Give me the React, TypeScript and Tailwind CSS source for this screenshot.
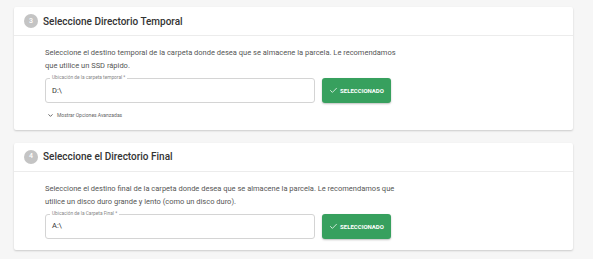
import { ChevronDown, Check } from "lucide-react";

type StepProps = {
  num: number;
  title: string;
  desc: string;
  label: string;
  value: string;
  advanced?: boolean;
};

function Step({ num, title, desc, label, value, advanced }: StepProps) {
  return (
    <div className="w-[559px] bg-white shadow-[0_1px_2px_rgba(0,0,0,0.18)] rounded-[2px]">
      <div className="h-[29px] flex items-center pl-[10px] border-b border-[#ececec]">
        <div className="w-[14px] h-[14px] rounded-full bg-[#c4c4c4] text-white text-[7px] font-medium flex items-center justify-center">
          {num}
        </div>
        <span className="ml-[5px] text-[10px] font-medium text-[#333]">{title}</span>
      </div>
      <div className={`pl-[31px] pt-[10px] ${advanced ? "pb-[10px]" : "pb-[11px]"}`}>
        <div className="w-[353px]">
          <p className="text-[7.5px] leading-[13px] text-[#555]">{desc}</p>
          <div className="flex items-center gap-[7px] mt-[6px] w-[347px]">
            <div className="relative w-[270px] h-[25px] border border-[#d4d4d4] rounded-[3px] flex items-center pl-[6px]">
              <span className="absolute -top-[4px] left-[4px] bg-white px-[2px] text-[4.8px] leading-[6px] text-[#888]">
                {label}
              </span>
              <span className="text-[7.5px] text-[#333]">{value}</span>
            </div>
            <button className="w-[69px] h-[25px] bg-[#37a05e] rounded-[3px] shadow-[0_1px_2px_rgba(0,0,0,0.25)] flex items-center justify-center gap-[2px] text-white text-[6px] font-bold">
              <Check size={9} strokeWidth={2} />
              SELECCIONADO
            </button>
          </div>
          {advanced && (
            <div className="flex items-center gap-[3px] mt-[9px] ml-[2px] text-[5px] text-[#666]">
              <ChevronDown size={7} strokeWidth={3} className="text-[#555]" />
              Mostrar Opciones Avanzadas
            </div>
          )}
        </div>
      </div>
    </div>
  );
}

export default function App() {
  return (
    <div
      className="w-[593px] h-[259px] bg-[#f6f6f6] pl-[14px] pt-[7px] flex flex-col gap-[13px] overflow-hidden"
      style={{ fontFamily: "Roboto, 'Liberation Sans', sans-serif" }}
    >
      <Step
        num={3}
        title="Seleccione Directorio Temporal"
        desc="Seleccione el destino temporal de la carpeta donde desea que se almacene la parcela. Le recomendamos que utilice un SSD rápido."
        label="Ubicación de la carpeta temporal *"
        value="D:\"
        advanced
      />
      <Step
        num={4}
        title="Seleccione el Directorio Final"
        desc="Seleccione el destino final de la carpeta donde desea que se almacene la parcela. Le recomendamos que utilice un disco duro grande y lento (como un disco duro)."
        label="Ubicación de la Carpeta Final *"
        value="A:\"
      />
    </div>
  );
}
